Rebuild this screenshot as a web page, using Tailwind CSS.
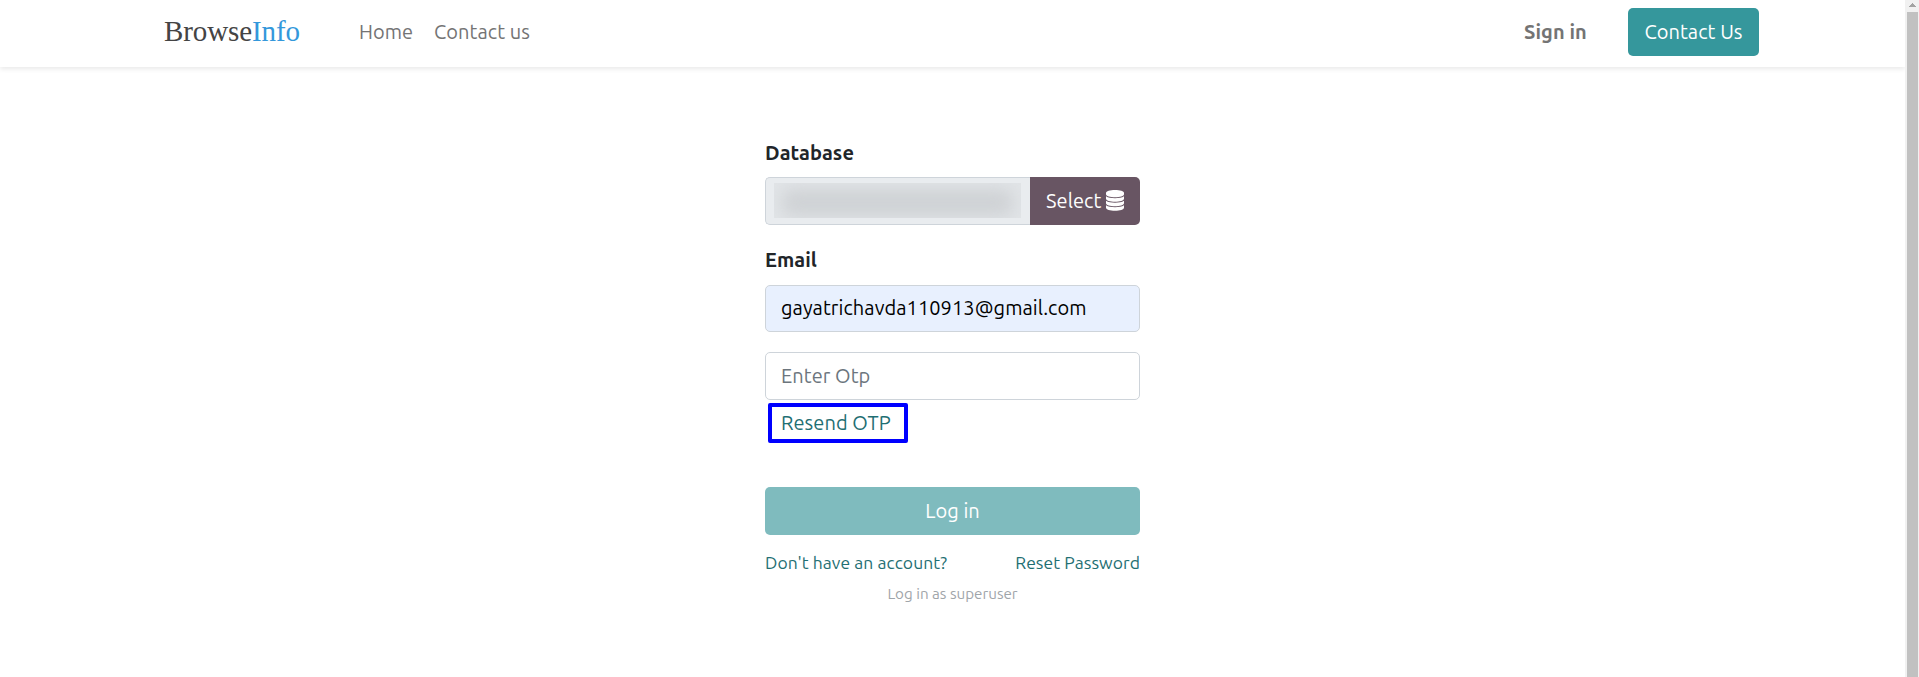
<!DOCTYPE html>
<html lang="en">
<head>
<meta charset="utf-8">
<title>Login | BrowseInfo</title>
<script src="https://cdn.jsdelivr.net/npm/@tailwindcss/browser@4"></script>
</head>
<body class="flex h-[677px] overflow-hidden bg-white font-['Ubuntu','Noto_Sans',sans-serif] text-[20px] leading-[30px] tracking-[0.07px] text-[#212529]">
<div class="flex w-[1905px] flex-col">
  <header class="flex h-[67px] shrink-0 items-start bg-white pr-[146px] pl-[164px] shadow-[0_2px_5px_rgba(0,0,0,0.09)]">
    <a class="mt-[12px] w-[195px] font-['Liberation_Serif',serif] text-[29px] leading-[38px] tracking-[-0.1px] whitespace-nowrap text-[#444]">Browse<span class="text-[#3498db]">Info</span></a>
    <nav class="mt-[17px] flex whitespace-nowrap text-[#747474]">
      <a class="w-[75px]">Home</a>
      <a>Contact us</a>
    </nav>
    <a class="mt-[17px] ml-auto w-[104px] font-bold whitespace-nowrap text-[#747474]">Sign in</a>
    <a class="mt-[8px] h-[48px] w-[131px] rounded-[5px] bg-[#35979c] pt-[9px] text-center whitespace-nowrap text-white">Contact Us</a>
  </header>
  <main class="mx-auto flex w-[375px] flex-col pt-[71px]">
    <label class="h-[39px] font-bold">Database</label>
    <div class="flex h-[48px]">
      <div class="w-[265px] rounded-l-[5px] border border-r-0 border-[#ced4da] bg-[#e9ecef] px-[8px] py-[5px]">
        <div class="h-[35px] w-[247px] overflow-hidden bg-[#e1e4e7]"><div class="mx-[8px] mt-[6px] h-[27px] rounded-[10px] bg-[#cfd2d5] blur-[8px]"></div></div>
      </div>
      <button class="flex w-[110px] items-start rounded-r-[5px] bg-[#685563] pt-[9px] pl-[16px] text-white">
        <span class="w-[60px] text-left">Select</span>
        <svg class="mt-[4px] h-[21px] w-[18px]" viewBox="0 0 18 21" fill="currentColor"><path d="M9 0c5 0 9 1.200 9 3v1.200c0 1.800-4 3-9 3s-9-1.200-9-3V3c0-1.800 4-3 9-3Z"/><path d="M0 6.300c2 1.400 5.500 1.900 9 1.900s7-.5 9-1.900v2.400c0 1.700-4 3-9 3s-9-1.300-9-3Z"/><path d="M0 10.800c2 1.400 5.500 1.900 9 1.900s7-.5 9-1.900v2.400c0 1.700-4 3-9 3s-9-1.300-9-3Z"/><path d="M0 15.300c2 1.400 5.500 1.900 9 1.900s7-.5 9-1.900v2.400c0 1.700-4 3-9 3s-9-1.300-9-3Z"/></svg>
      </button>
    </div>
    <label class="mt-[20px] h-[40px] font-bold">Email</label>
    <div class="h-[47px] rounded-[5px] border border-[#ced4da] bg-[#e8f0fe] px-[15px] pt-[7px] whitespace-nowrap text-black">gayatrichavda110913@gmail.com</div>
    <div class="mt-[20px] h-[48px] rounded-[5px] border border-[#ced4da] bg-white px-[15px] pt-[8px] text-[#6c757d]">Enter Otp</div>
    <a class="mt-[3px] ml-[3px] h-[40px] w-[140px] rounded-[2px] border-4 border-[#0000ff] pt-px pl-[9px] whitespace-nowrap text-[#1f6f73]">Resend OTP</a>
    <button class="mt-[44px] h-[48px] rounded-[5px] bg-[#7fbbbe] pb-px text-white">Log in</button>
    <div class="mt-[15px] flex justify-between text-[17.500px] leading-[26px] whitespace-nowrap text-[#1f6f73]"><a>Don't have an account?</a><a>Reset Password</a></div>
    <a class="mt-[6px] text-center text-[15.200px] leading-[23px] tracking-normal text-[#9fa5aa]">Log in as superuser</a>
  </main>
</div>
<div class="flex w-[14px] flex-col items-center bg-[#f1f1f1] pt-[3px]">
  <svg class="h-[4px] w-[7px] shrink-0" viewBox="0 0 7 4" fill="#a3a3a3"><path d="M3 0h1v1h1v1h1v1h1v1H0V3h1V2h1V1h1Z"/></svg>
  <div class="mt-[5px] w-[11px] flex-1 bg-[#c1c1c1]"></div>
</div>
</body>
</html>
